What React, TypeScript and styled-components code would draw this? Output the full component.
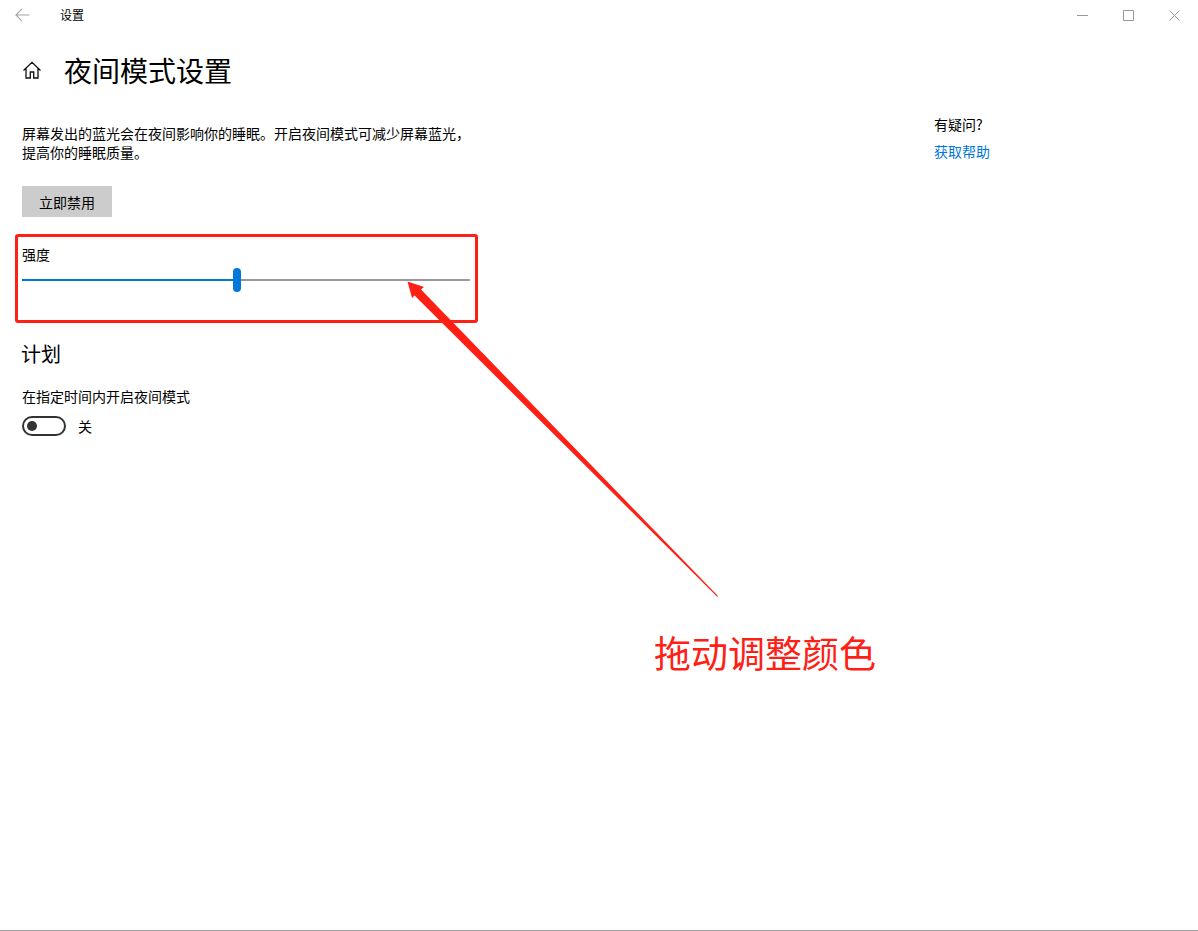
import styled, { createGlobalStyle } from 'styled-components';

const GlobalStyle = createGlobalStyle`
  html, body {
    margin: 0;
    padding: 0;
    background: #fff;
  }
  body {
    font-family: "Noto Sans CJK SC", "Liberation Sans", sans-serif;
    color: #000;
  }
`;

const Page = styled.div`
  position: relative;
  width: 1198px;
  height: 931px;
  box-sizing: border-box;
  overflow: hidden;
  background: #fff;
  border-bottom: 1px solid #a0a0a0;
`;

const TitleBar = styled.div`
  height: 30px;
  display: flex;
  align-items: center;
  padding-left: 15px;
`;

const BackButton = styled.svg`
  width: 15px;
  height: 14px;
  color: #a6a6a6;
`;

const WindowTitle = styled.div`
  margin-left: 30px;
  font-size: 12px;
  line-height: 16px;
`;

const WindowControls = styled.div`
  margin-left: auto;
  display: flex;
  align-items: center;
  gap: 35px;
  padding-right: 18px;
  color: #999;
`;

const ControlIcon = styled.svg`
  width: 11px;
  height: 11px;
  display: block;
`;

const Header = styled.div`
  height: 40px;
  margin-top: 20px;
  padding-left: 22px;
  display: flex;
  align-items: center;
  gap: 23px;
`;

const HomeIcon = styled.svg`
  width: 20px;
  height: 20px;
  color: #111;
`;

const PageTitle = styled.h1`
  margin: -1px 0 0 -1px;
  font-size: 28px;
  line-height: 40px;
  font-weight: 400;
`;

const Body = styled.div`
  display: flex;
  padding: 24px 0 0 22px;
`;

const Main = styled.div`
  width: 448px;
`;

const Description = styled.p`
  margin: 10px 0 0;
  font-size: 14px;
  line-height: 19px;
`;

const ActionButton = styled.button`
  display: block;
  margin-top: 24px;
  width: 90px;
  height: 31px;
  border: 0;
  padding: 0;
  background: #ccc;
  color: #000;
  font: inherit;
  font-size: 14px;
`;

const FieldLabel = styled.div`
  margin-top: 27px;
  font-size: 14px;
  line-height: 20px;
`;

const Slider = styled.div`
  margin-top: 4px;
  height: 24px;
  display: flex;
  align-items: center;
`;

const SliderTrack = styled.div<{ $active?: boolean }>`
  height: 2px;
  flex: ${({ $active }) => ($active ? '0 0 211px' : '1')};
  background: ${({ $active }) => ($active ? '#0078d7' : '#999')};
`;

const SliderThumb = styled.div`
  width: 8px;
  height: 24px;
  border-radius: 4px;
  background: #0078d7;
`;

const SectionTitle = styled.h2`
  margin: 48px 0 0 -1px;
  font-size: 20px;
  line-height: 28px;
  font-weight: 400;
`;

const ToggleLabel = styled.div`
  margin-top: 18px;
  font-size: 14px;
  line-height: 20px;
`;

const ToggleRow = styled.div`
  margin-top: 10px;
  display: flex;
  align-items: center;
  gap: 12px;
  font-size: 14px;
  line-height: 20px;
`;

const ToggleTrack = styled.div`
  width: 44px;
  height: 20px;
  box-sizing: border-box;
  border: 2px solid #333;
  border-radius: 10px;
  display: flex;
  align-items: center;
  padding-left: 3px;
`;

const ToggleKnob = styled.div`
  width: 10px;
  height: 10px;
  border-radius: 50%;
  background: #333;
`;

const Aside = styled.aside`
  margin-left: 464px;
  font-size: 14px;
`;

const AsideTitle = styled.div`
  line-height: 20px;
`;

const HelpLink = styled.a`
  display: block;
  margin-top: 7px;
  line-height: 20px;
  color: #0078d7;
`;

const MarkBox = styled.div`
  position: absolute;
  left: 15px;
  top: 234px;
  width: 463px;
  height: 89px;
  box-sizing: border-box;
  border: 3px solid #ff2015;
  border-radius: 3px;
`;

const ArrowOverlay = styled.svg`
  position: absolute;
  left: 0;
  top: 0;
  width: 1198px;
  height: 931px;
  pointer-events: none;
`;

const MarkText = styled.div`
  position: absolute;
  left: 654px;
  top: 625px;
  font-size: 37px;
  line-height: 54px;
  color: #ff2015;
  white-space: nowrap;
`;

export default function App() {
  return (
    <Page>
      <GlobalStyle />
      <TitleBar>
        <BackButton viewBox="0 0 15 14" fill="none" stroke="currentColor" strokeWidth="1.1">
          <path d="M14.5 7H1M7 .8 .9 7 7 13.2" />
        </BackButton>
        <WindowTitle>设置</WindowTitle>
        <WindowControls>
          <ControlIcon viewBox="0 0 11 11" fill="none" stroke="currentColor">
            <path d="M0 5.5h11" />
          </ControlIcon>
          <ControlIcon viewBox="0 0 11 11" fill="none" stroke="currentColor">
            <path d="M.5.5h10v10H.5z" />
          </ControlIcon>
          <ControlIcon viewBox="0 0 11 11" fill="none" stroke="currentColor">
            <path d="M.5.5l10 10M10.5.5l-10 10" />
          </ControlIcon>
        </WindowControls>
      </TitleBar>
      <Header>
        <HomeIcon viewBox="0 0 20 20" fill="none" stroke="currentColor" strokeWidth="1.3">
          <path d="M1.5 10.5 10 2.3l8.5 8.2M4 8.5V18h4.3v-6h3.4v6H16V8.5" />
        </HomeIcon>
        <PageTitle>夜间模式设置</PageTitle>
      </Header>
      <Body>
        <Main>
          <Description>
            屏幕发出的蓝光会在夜间影响你的睡眠。开启夜间模式可减少屏幕蓝光，提高你的睡眠质量。
          </Description>
          <ActionButton>立即禁用</ActionButton>
          <FieldLabel>强度</FieldLabel>
          <Slider>
            <SliderTrack $active />
            <SliderThumb />
            <SliderTrack />
          </Slider>
          <SectionTitle>计划</SectionTitle>
          <ToggleLabel>在指定时间内开启夜间模式</ToggleLabel>
          <ToggleRow>
            <ToggleTrack>
              <ToggleKnob />
            </ToggleTrack>
            关
          </ToggleRow>
        </Main>
        <Aside>
          <AsideTitle>有疑问?</AsideTitle>
          <HelpLink>获取帮助</HelpLink>
        </Aside>
      </Body>
      <MarkBox />
      <ArrowOverlay viewBox="0 0 1198 931">
        <polygon points="407.5,281.5 424,287 421,289.5 718,596 717.2,596.8 414.5,295.5 412,298" fill="#ff2015" />
      </ArrowOverlay>
      <MarkText>拖动调整颜色</MarkText>
    </Page>
  );
}
